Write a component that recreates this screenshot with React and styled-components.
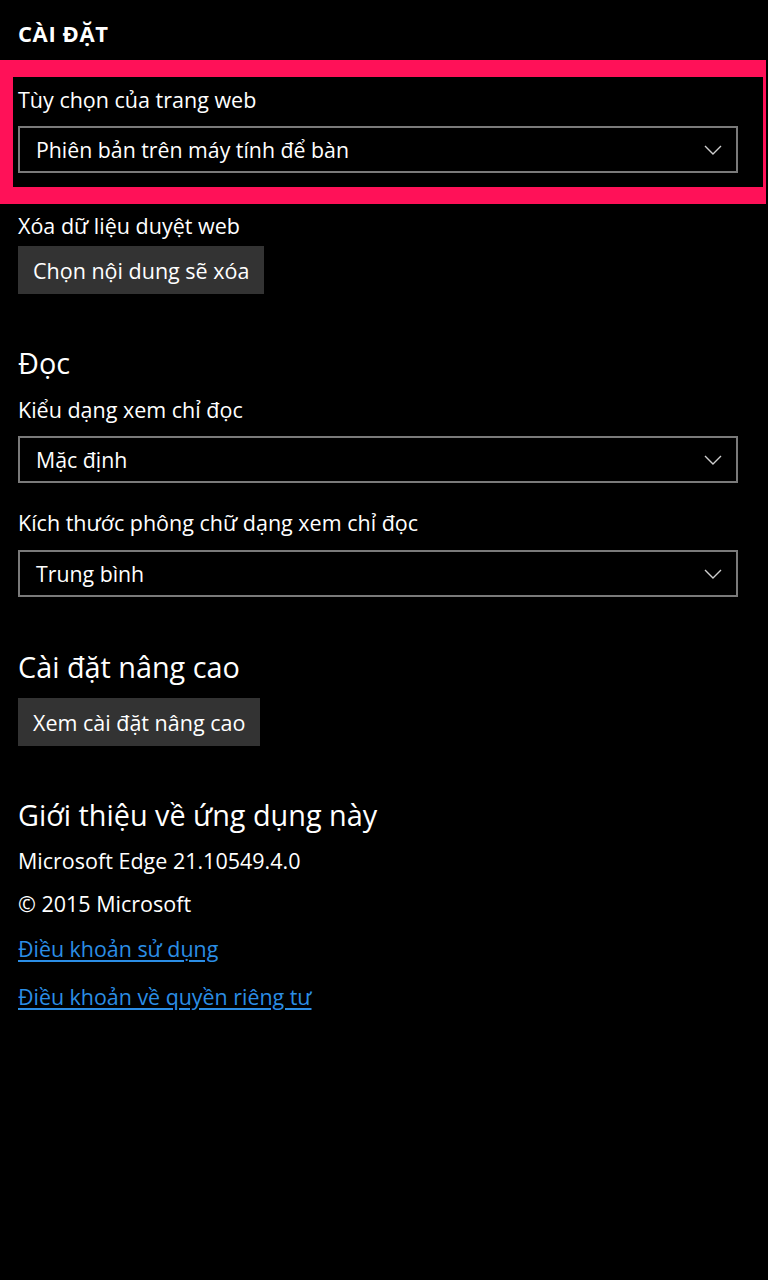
import React from 'react';
import styled, { createGlobalStyle } from 'styled-components';

const GlobalStyle = createGlobalStyle`
  html, body {
    margin: 0;
    padding: 0;
    background: #000;
  }
  body {
    font-family: "Open Sans", "Noto Sans", sans-serif;
    color: #fff;
  }
`;

const Page = styled.div`
  width: 768px;
  min-height: 1280px;
  background: #000;
  padding-top: 19px;
  box-sizing: border-box;
`;

const Title = styled.h1`
  margin: 0 0 13px 18px;
  font-size: 22px;
  line-height: 28px;
  font-weight: 700;
  letter-spacing: 0.6px;
`;

const Highlight = styled.div`
  width: 766px;
  box-sizing: border-box;
  border-style: solid;
  border-color: #ff1158;
  border-width: 17px 3px 17px 13px;
  padding: 9px 25px 14px 5px;
`;

const Body = styled.div`
  padding: 0 30px 0 18px;
`;

const Label = styled.div`
  margin-top: ${(p) => p.$top || 0}px;
  font-size: 21.5px;
  line-height: 28px;
  color: #fff;
`;

const Heading = styled.h2`
  margin: ${(p) => p.$top || 0}px 0 0;
  font-size: 28.8px;
  line-height: 34px;
  font-weight: 400;
`;

const SelectBox = styled.div`
  margin-top: ${(p) => p.$top || 12}px;
  height: 47px;
  width: 720px;
  box-sizing: border-box;
  border: 2px solid #7a7a7a;
  display: flex;
  align-items: center;
  justify-content: space-between;
  padding: 0 14px 0 16px;
  font-size: 21.3px;
`;

const Button = styled.div`
  margin-top: ${(p) => p.$top || 6}px;
  display: inline-flex;
  align-items: center;
  height: 48px;
  padding: 0 15px;
  background: #333;
  font-size: 21.5px;
`;

const Link = styled.a`
  display: block;
  width: fit-content;
  margin-top: ${(p) => p.$top || 0}px;
  font-size: 21.4px;
  line-height: 28px;
  color: #2b8ee6;
  text-decoration: underline;
  text-underline-offset: 3px;
`;

const Chevron = () => (
  <svg width="18" height="10" viewBox="0 0 18 10">
    <path d="M1 1 L9 9 L17 1" fill="none" stroke="#cfcfcf" strokeWidth="1.4" />
  </svg>
);

const Select = ({ value, top }) => (
  <SelectBox $top={top}>
    <span>{value}</span>
    <Chevron />
  </SelectBox>
);

export default function App() {
  return (
    <Page>
      <GlobalStyle />
      <Title>CÀI ĐẶT</Title>
      <Highlight>
        <Label>Tùy chọn của trang web</Label>
        <Select value="Phiên bản trên máy tính để bàn" />
      </Highlight>
      <Body>
        <Label $top={8}>Xóa dữ liệu duyệt web</Label>
        <Button>Chọn nội dung sẽ xóa</Button>

        <Heading $top={52}>Đọc</Heading>
        <Label $top={16}>Kiểu dạng xem chỉ đọc</Label>
        <Select value="Mặc định" />
        <Label $top={26}>Kích thước phông chữ dạng xem chỉ đọc</Label>
        <Select value="Trung bình" top={13} />

        <Heading $top={53}>Cài đặt nâng cao</Heading>
        <Button $top={14}>Xem cài đặt nâng cao</Button>

        <Heading $top={52}>Giới thiệu về ứng dụng này</Heading>
        <Label $top={15}>Microsoft Edge 21.10549.4.0</Label>
        <Label $top={15}>© 2015 Microsoft</Label>
        <Link $top={17}>Điều khoản sử dụng</Link>
        <Link $top={20}>Điều khoản về quyền riêng tư</Link>
      </Body>
    </Page>
  );
}
